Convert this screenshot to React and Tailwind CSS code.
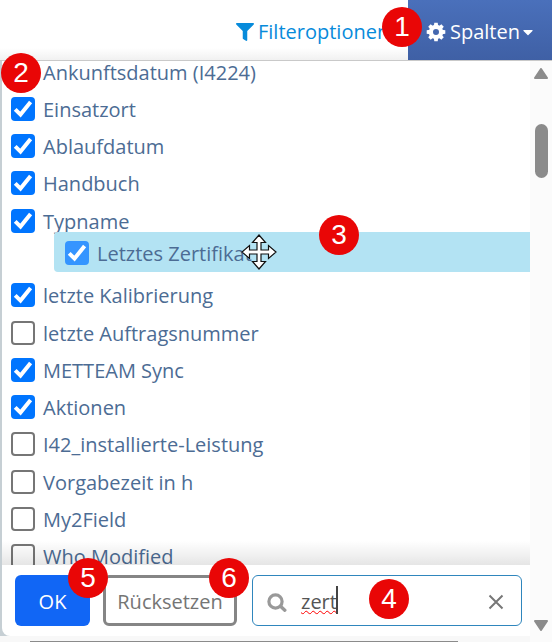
import { useState } from "react";
import { FaFilter, FaCaretDown } from "react-icons/fa";

const COLUMNS = [
  { label: "Ankunftsdatum (I4224)", visible: true },
  { label: "Einsatzort", visible: true },
  { label: "Ablaufdatum", visible: true },
  { label: "Handbuch", visible: true },
  { label: "Typname", visible: true },
  { label: "Letztes Zertifikat", visible: true, dragging: true },
  { label: "letzte Kalibrierung", visible: true },
  { label: "letzte Auftragsnummer", visible: false },
  { label: "METTEAM Sync", visible: true },
  { label: "Aktionen", visible: true },
  { label: "I42_installierte-Leistung", visible: false },
  { label: "Vorgabezeit in h", visible: false },
  { label: "My2Field", visible: false },
  { label: "Who Modified", visible: false },
];

const GEAR_TEETH = [0, 45, 90, 135, 180, 225, 270, 315];

function Badge({ children, className }) {
  return (
    <span
      className={`pointer-events-none absolute z-20 flex size-10 items-center justify-center rounded-full bg-[#e90606] font-['Liberation_Sans',Arial,sans-serif] text-[28px] leading-none text-white ${className}`}
    >
      {children}
    </span>
  );
}

function GearIcon() {
  return (
    <svg viewBox="0 0 20 20" className="size-5 shrink-0">
      <circle cx="10" cy="10" r="5.1" fill="none" stroke="currentColor" strokeWidth="4.2" />
      {GEAR_TEETH.map((angle) => (
        <path key={angle} d="M7.8 4 L8.3 0.7 H11.7 L12.2 4 Z" fill="currentColor" transform={`rotate(${angle} 10 10)`} />
      ))}
    </svg>
  );
}

function SearchIcon() {
  return (
    <svg viewBox="0 0 20 20" className="size-5 shrink-0" fill="none" stroke="#999" strokeLinecap="round">
      <circle cx="8.5" cy="9.5" r="6.6" strokeWidth="3.2" />
      <path d="M13.8 14.6 L17.8 18.2" strokeWidth="3.4" />
    </svg>
  );
}

function ColumnToggle({ label, visible, faded }) {
  const [checked, setChecked] = useState(visible);
  return (
    <label className="flex items-center gap-2 whitespace-nowrap">
      <span className="relative flex size-6 shrink-0">
        <input
          type="checkbox"
          checked={checked}
          onChange={(e) => setChecked(e.target.checked)}
          className={`size-6 appearance-none rounded-[4px] border-2 border-[#767676] bg-white checked:border-0 ${
            faded ? "checked:bg-[#3595ff]" : "checked:bg-[#0075ff]"
          }`}
        />
        {checked && (
          <svg viewBox="0 0 24 24" className="pointer-events-none absolute inset-0 size-6">
            <path d="M4.2 12.4 L9.5 17.6 L19.6 5" fill="none" stroke="white" strokeWidth="4" />
          </svg>
        )}
      </span>
      <span className="pt-[2px]">{label}</span>
    </label>
  );
}

function MoveCursor() {
  return (
    <svg viewBox="0 0 36 36" className="pointer-events-none absolute top-[2px] left-[187px] size-9">
      <path
        d="M18 1 L24.5 8.5 H20 V16 H27.5 V11.5 L35 18 L27.5 24.5 V20 H20 V27.5 H24.5 L18 35 L11.5 27.5 H16 V20 H8.5 V24.5 L1 18 L8.5 11.5 V16 H16 V8.5 H11.5 Z"
        fill="white"
        stroke="#111"
        strokeWidth="1.2"
      />
    </svg>
  );
}

function Scrollbar() {
  return (
    <div className="flex w-[22px] shrink-0 flex-col items-center bg-[#fbfbfb] pt-[7px] pb-[11px]">
      <svg viewBox="0 0 14 11" className="h-[11px] w-[14px]">
        <path d="M7 1 L13 10 H1 Z" fill="#8b8b8b" stroke="#8b8b8b" strokeWidth="2" strokeLinejoin="round" />
      </svg>
      <div className="mt-[45px] h-[54px] w-[13px] rounded-full bg-[#8b8b8b]" />
      <svg viewBox="0 0 14 11" className="mt-auto h-[11px] w-[14px]">
        <path d="M1 1 H13 L7 10 Z" fill="#8b8b8b" stroke="#8b8b8b" strokeWidth="2" strokeLinejoin="round" />
      </svg>
    </div>
  );
}

export default function App() {
  const [query, setQuery] = useState("zert");
  return (
    <main className="flex h-screen flex-col overflow-hidden bg-[#c6cfd4] font-['Open_Sans','Noto_Sans',sans-serif] text-[20px] leading-7 text-[#4c6c94]">
      <header className="flex h-[61px] shrink-0 justify-end border-b border-[#c9c9c9] bg-linear-to-b from-white from-80% to-[#f1f1f1]">
        <div className="relative flex">
          <button className="flex w-[172px] items-center gap-1 overflow-hidden pt-[3px] text-[#078bdb]">
            <FaFilter className="size-[18px] shrink-0" />
            <span>Filteroptionen</span>
          </button>
          <Badge className="top-[7px] -right-[14px]">1</Badge>
        </div>
        <button className="flex w-36 items-center justify-center bg-linear-to-b from-[#4a70bb] to-[#3f60a5] pt-[3px] pl-[2px] text-white">
          <GearIcon />
          <span className="ml-1">Spalten</span>
          <FaCaretDown className="size-4 shrink-0" />
        </button>
      </header>

      <div className="relative flex min-h-0 flex-1 pl-[2px]">
        <Badge className="-top-2 left-px">2</Badge>
        <div className="flex min-w-0 flex-1 flex-col">
          <section className="relative min-h-0 flex-1 overflow-hidden bg-white">
            <ul className="-mt-2 grid h-[522px] auto-rows-fr">
              {COLUMNS.map((c) =>
                c.dragging ? (
                  <li key={c.label} className="relative">
                    <div className="absolute right-0 -top-[7px] left-[52px] flex h-10 items-center rounded-l-[4px] bg-[#b3e3f3] pt-[2px] pl-[11px]">
                      <ColumnToggle {...c} faded />
                      <MoveCursor />
                      <Badge className="-top-[17px] left-[265px]">3</Badge>
                    </div>
                  </li>
                ) : (
                  <li key={c.label} className="flex items-center pl-[9px]">
                    <ColumnToggle {...c} />
                  </li>
                )
              )}
            </ul>
            <div className="pointer-events-none absolute inset-x-0 bottom-0 h-6 bg-linear-to-b from-black/0 to-black/10" />
          </section>

          <footer className="flex h-[71px] shrink-0 items-center rounded-bl-lg bg-white pr-2 pl-[13px]">
            <div className="relative">
              <button className="h-[51px] w-[75px] rounded-md bg-[#1166f5] pt-[2px] text-white">OK</button>
              <Badge className="-top-[17px] -right-[18px]">5</Badge>
            </div>
            <div className="relative ml-[13px]">
              <button className="h-[51px] w-[134px] rounded-md border-3 border-[#858585] pt-[2px] text-[#757575]">
                Rücksetzen
              </button>
              <Badge className="-top-[17px] -right-3">6</Badge>
            </div>
            <div className="relative ml-[15px] flex h-[51px] min-w-0 flex-1 items-center rounded-md border border-[#2f86bd] bg-white pt-[2px] pr-4 pl-[14px] text-[#555]">
              <SearchIcon />
              <input
                type="text"
                aria-label="Spalten suchen"
                value={query}
                onChange={(e) => setQuery(e.target.value)}
                className="ml-[14px] w-0 min-w-0 flex-1 bg-transparent underline decoration-[#f00] decoration-wavy decoration-1 outline-none"
              />
              <span className="absolute top-[10px] left-[83px] h-7 w-[2px] bg-[#444]" />
              <button aria-label="Suche leeren">
                <svg viewBox="0 0 18 18" className="size-[18px]">
                  <path d="M2.5 2.5 L15.5 15.5 M15.5 2.5 L2.5 15.5" stroke="#777" strokeWidth="2" />
                </svg>
              </button>
              <Badge className="top-[3px] left-[116px]">4</Badge>
            </div>
          </footer>
          <div className="-ml-[2px] flex h-[6px] shrink-0 items-end bg-[#f8f8f8] pr-[72px] pl-[30px]">
            <span className="h-px flex-1 bg-[#8b8b8b]" />
          </div>
        </div>
        <Scrollbar />
      </div>
    </main>
  );
}
